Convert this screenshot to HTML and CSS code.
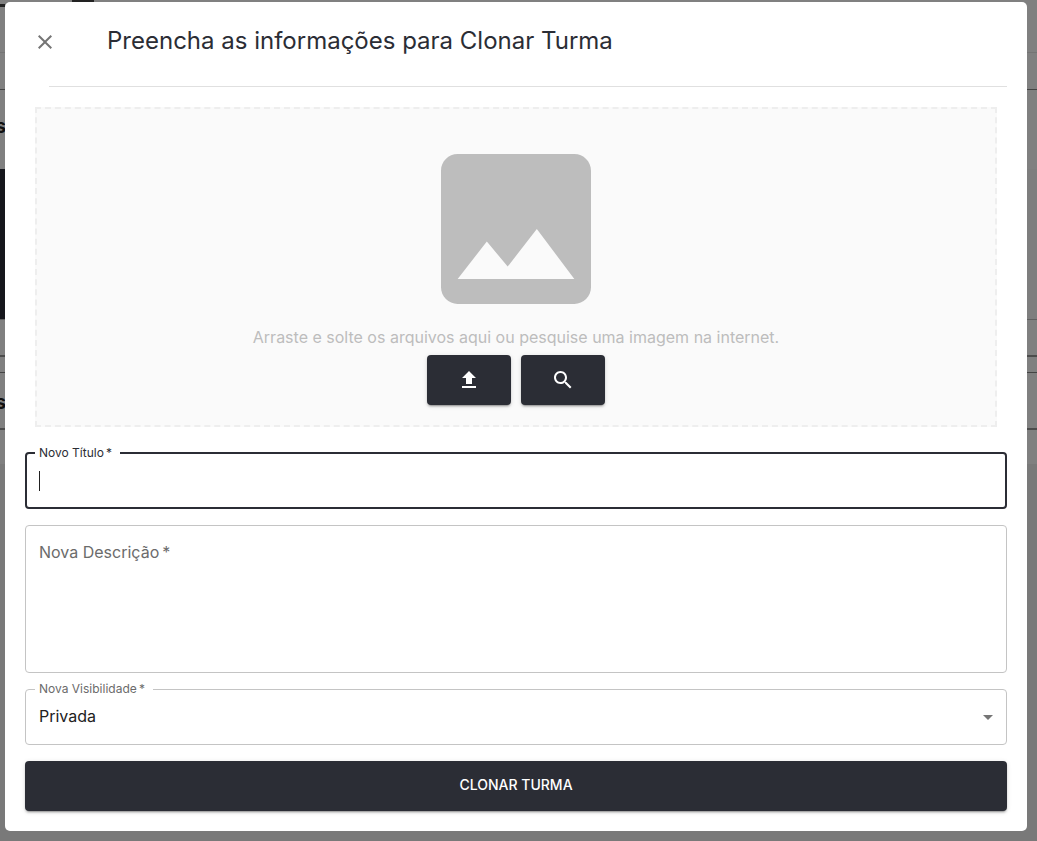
FILE: index.html
```html
<!DOCTYPE html>
<html lang="pt-BR">
<head>
<meta charset="utf-8">
<meta name="viewport" content="width=device-width, initial-scale=1">
<title>Clonar Turma</title>
<link rel="stylesheet" href="styles.css">
</head>
<body>
<div class="page" aria-hidden="true">
  <div class="page-bar"><span class="page-mark"></span><span class="page-mark page-mark-wide"></span></div>
  <div class="page-tabs"></div>
  <div class="page-heading">s</div>
  <div class="page-cover"></div>
  <div class="page-footer"></div>
  <div class="page-gap"></div>
  <div class="page-card">s</div>
  <div class="page-end"></div>
</div>
<div class="backdrop">
  <main class="dialog" role="dialog" aria-labelledby="dialog-title">
    <header class="dialog-header">
      <button class="close" type="button" aria-label="Fechar">
        <svg viewBox="0 0 24 24" width="24" height="24"><path d="M19 6.41 17.59 5 12 10.59 6.41 5 5 6.41 10.59 12 5 17.59 6.41 19 12 13.41 17.59 19 19 17.59 13.41 12z"/></svg>
      </button>
      <h1 class="title" id="dialog-title">Preencha as informações para Clonar Turma</h1>
    </header>
    <hr class="divider">
    <form class="form">
      <section class="dropzone">
        <svg class="picture" viewBox="3 3 18 18" width="150" height="150"><path fill-rule="evenodd" d="M21 19V5c0-1.100-.9-2-2-2H5c-1.100 0-2 .9-2 2v14c0 1.100.9 2 2 2h14c1.100 0 2-.9 2-2zM8.500 13.500l2.500 3.010L14.500 12l4.500 6H5l3.500-4.500z"/></svg>
        <p class="hint">Arraste e solte os arquivos aqui ou pesquise uma imagem na internet.</p>
        <div class="actions">
          <button class="button button-icon" type="button" aria-label="Enviar imagem">
            <svg viewBox="0 0 24 24" width="24" height="24"><path d="M9 16h6v-6h4l-7-7-7 7h4zm-4 2h14v2H5z"/></svg>
          </button>
          <button class="button button-icon" type="button" aria-label="Pesquisar imagem">
            <svg viewBox="0 0 24 24" width="24" height="24"><path d="M15.500 14h-.79l-.28-.27C15.410 12.590 16 11.110 16 9.500 16 5.910 13.090 3 9.500 3S3 5.910 3 9.500 5.910 16 9.500 16c1.610 0 3.090-.59 4.230-1.570l.27.28v.79l5 4.990L20.490 19l-4.990-5zm-6 0C7.010 14 5 11.990 5 9.500S7.010 5 9.500 5 14 7.010 14 9.500 11.990 14 9.500 14z"/></svg>
          </button>
        </div>
      </section>
      <div class="field field-active">
        <label class="label" for="titulo">Novo Título&#8201;*</label>
        <input class="control" id="titulo" type="text">
        <span class="caret"></span>
      </div>
      <div class="field">
        <label class="label label-inside" for="descricao">Nova Descrição&#8201;*</label>
        <textarea class="control control-area" id="descricao"></textarea>
      </div>
      <div class="field">
        <label class="label" for="visibilidade">Nova Visibilidade&#8201;*</label>
        <select class="control control-select" id="visibilidade"><option>Privada</option></select>
        <svg class="arrow" viewBox="0 0 24 24" width="24" height="24"><path d="m7 10 5 5 5-5z"/></svg>
      </div>
      <button class="button button-submit" type="submit">CLONAR TURMA</button>
    </form>
  </main>
</div>
</body>
</html>
```
FILE: styles.css
```css
* { box-sizing: border-box; }

body {
  margin: 0;
  min-height: 100vh;
  background: #797979;
  color: #212121;
  font-family: Inter, "Liberation Sans", sans-serif;
  font-size: 16px;
  line-height: 24px;
}

svg { display: block; fill: currentColor; }

/* Dimmed page behind the dialog */
.page {
  position: absolute;
  inset: 0;
  overflow: hidden;
  background: #797979;
  color: #111;
  font-size: 20px;
  font-weight: 700;
}
.page > div { background: #808080; }
.page .page-bar { height: 53px; border-bottom: 1px solid #747474; display: flex; gap: 67px; }
.page-mark { width: 5px; height: 3px; margin-top: 4px; background: #222; }
.page-mark-wide { width: 22px; height: 2px; margin-top: 0; }
.page-tabs { height: 37px; border-bottom: 1px solid #444; }
.page-heading { height: 79px; padding-top: 24px; text-indent: -5px; }
.page .page-cover { height: 151px; border-bottom: 1px solid #606060; background: linear-gradient(90deg, #15161c 50%, #7e7e7e 50%); }
.page-footer { height: 37px; border-bottom: 2px solid #4c4c4c; }
.page-gap { height: 16px; border-bottom: 1px solid #444; }
.page-card { height: 57px; padding-top: 17px; border-bottom: 2px solid #4c4c4c; text-indent: -5px; }
.page-end { height: 34px; }

.backdrop { position: relative; padding: 2px 10px 10px 5px; }

.dialog {
  padding: 20px;
  border-radius: 5px;
  background: #fff;
}

.dialog-header {
  display: flex;
  align-items: center;
  gap: 50px;
  padding-left: 8px;
  height: 40px;
}
.close {
  padding: 0;
  border: 0;
  background: none;
  color: #757575;
}
.title {
  margin: 0;
  padding-bottom: 2px;
  color: #2b2d35;
  font-size: 24px;
  font-weight: 400;
  line-height: 32px;
}
.divider {
  height: 1px;
  margin: 24px 0 20px 24px;
  border: 0;
  background: #e0e0e0;
}

.form { display: flex; flex-direction: column; gap: 16px; }

.dropzone {
  display: flex;
  flex-direction: column;
  align-items: center;
  margin: 0 10px 9px;
  padding: 45px 20px 20px;
  border: 2px dashed #eee;
  background: #fafafa;
  color: #bdbdbd;
}
.hint { margin: 21px 0 6px; text-align: center; }
.actions { display: flex; gap: 10px; }

.button {
  display: flex;
  align-items: center;
  justify-content: center;
  height: 50px;
  padding: 0 16px;
  border: 0;
  border-radius: 4px;
  background: #2b2d35;
  box-shadow: 0 3px 1px -2px rgba(0, 0, 0, .2), 0 2px 2px rgba(0, 0, 0, .14), 0 1px 5px rgba(0, 0, 0, .12);
  color: #fff;
  font: 500 14px/24px Inter, "Liberation Sans", sans-serif;
}
.button-icon { width: 84px; }
.button-submit { padding-bottom: 2px; }

.field { position: relative; display: flex; }
.control {
  width: 100%;
  height: 56px;
  padding: 0 13px;
  border: 1px solid #c4c4c4;
  border-radius: 4px;
  outline: 0;
  background: #fff;
  color: #212121;
  font: 400 16px/24px Inter, "Liberation Sans", sans-serif;
}
.field-active .control { height: 57px; border: 2px solid #2b2d35; }
.control-area { height: 148px; padding: 15px 13px; resize: none; }
.control-select { padding-bottom: 2px; appearance: none; }
.label {
  position: absolute;
  top: -8px;
  left: 10px;
  padding: 0 8px 0 4px;
  background: #fff;
  color: #6b6b6b;
  font-size: 12px;
  line-height: 16px;
}
.field-active .label { top: -7px; color: #2b2d35; }
.label-inside { top: 15px; font-size: 16px; line-height: 24px; }
.caret { position: absolute; top: 19px; left: 14px; width: 1px; height: 20px; background: #212121; }
.arrow { position: absolute; top: 16px; right: 7px; color: #757575; pointer-events: none; }
```
